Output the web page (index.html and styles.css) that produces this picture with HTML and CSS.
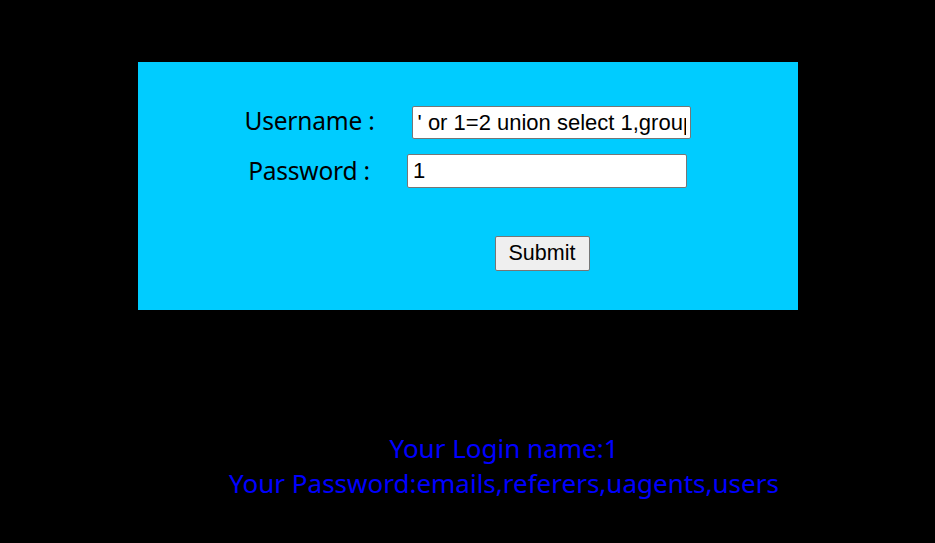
FILE: index.html
```html
<!DOCTYPE html>
<html>
<head>
<meta charset="utf-8">
<link rel="stylesheet" href="styles.css">
</head>
<body>
<div class="panel">
  <form class="login">
    <div class="row row-user">
      <span class="label">Username :</span>
      <input class="field field-user" type="text" value="' or 1=2 union select 1,group_concat(table_name) from information_schema.tables where table_schema=database()#">
    </div>
    <div class="row row-pass">
      <span class="label">Password :</span>
      <input class="field field-pass" type="text" value="1">
    </div>
    <div class="submit-row">
      <button class="submit" type="button">Submit</button>
    </div>
  </form>
</div>
<div class="result">
  <div class="line">Your Login name:1</div>
  <div class="line">Your Password:emails,referers,uagents,users</div>
</div>
</body>
</html>
```

FILE: styles.css
```css
html, body {
  margin: 0;
  padding: 0;
  background: #000;
}
body {
  padding-top: 62px;
  font-family: "Noto Sans", "Open Sans", sans-serif;
}
.panel {
  width: 660px;
  height: 248px;
  margin: 0 auto;
  background: #00ccff;
  box-sizing: border-box;
  padding-top: 44px;
}
.login {
  display: flex;
  flex-direction: column;
}
.row {
  display: flex;
  justify-content: center;
  align-items: center;
  gap: 37px;
}
.row-user {
  height: 33px;
  margin-bottom: 15px;
}
.row-pass {
  height: 34px;
}
.label {
  font-size: 24.5px;
  letter-spacing: -0.2px;
  color: #000;
  position: relative;
  top: -2px;
}
.row-pass .label {
  top: -1px;
}
.field {
  box-sizing: border-box;
  border: 1px solid #767676;
  border-radius: 2px;
  background: #fff;
  padding: 0 4px 0 5px;
  font-family: "Liberation Sans", Arial, sans-serif;
  font-size: 22px;
  color: #000;
}
.field-user { width: 279px; height: 33px; }
.field-pass { width: 280px; height: 34px; }
.submit-row {
  display: flex;
  padding-left: 357px;
  margin-top: 48px;
}
.submit {
  width: 95px;
  height: 35px;
  box-sizing: border-box;
  border: 1px solid #767676;
  border-radius: 2px;
  background: #efefef;
  font-family: "Liberation Sans", Arial, sans-serif;
  font-size: 21.5px;
  color: #000;
  padding: 0;
}
.result {
  margin-top: 121px;
  padding-left: 73px;
  text-align: center;
  color: #0000ff;
  font-size: 26px;
  line-height: 35px;
}
```
